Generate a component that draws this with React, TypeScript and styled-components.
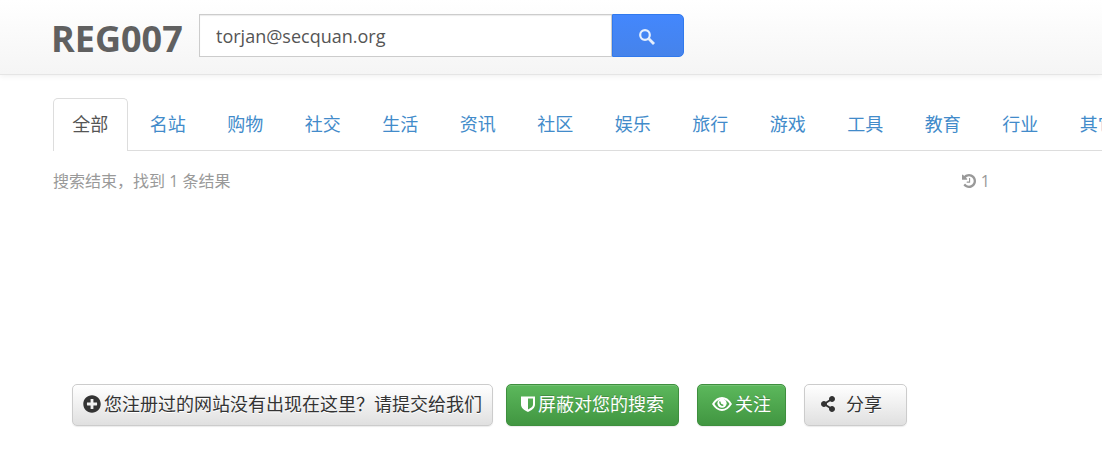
import React from "react";
import styled, { createGlobalStyle, css } from "styled-components";
import { FaPlusCircle, FaShareAlt } from "react-icons/fa";

const GlobalStyle = createGlobalStyle`
  * { box-sizing: border-box; }
  body {
    margin: 0;
    background: #fff;
    color: #333;
    font: 18px/26px "Open Sans", "Noto Sans CJK SC", sans-serif;
    overflow-x: hidden;
  }
`;

const Header = styled.header`
  display: flex;
  align-items: flex-start;
  gap: 18px;
  height: 75px;
  padding: 14px 51px 0;
  background: linear-gradient(#fff, #f5f5f5);
  border-bottom: 1px solid #e5e5e5;
  box-shadow: 0 1px 6px rgba(0, 0, 0, 0.07);
`;

const Logo = styled.a`
  width: 130px;
  color: #606060;
  font-size: 36px;
  font-weight: 700;
  line-height: 50px;
  white-space: nowrap;
  text-decoration: none;
`;

const SearchForm = styled.form`
  display: flex;
  flex: 0 1 485px;
  height: 43px;
`;

const SearchInput = styled.input`
  flex: 1;
  min-width: 0;
  padding: 0 16px;
  border: 1px solid #ccc;
  border-radius: 0;
  background: #fff;
  box-shadow: inset 0 1px 1px rgba(0, 0, 0, 0.08);
  color: #555;
  font: inherit;
  outline: none;
`;

const SearchButton = styled.button`
  display: flex;
  align-items: center;
  justify-content: center;
  width: 72px;
  padding: 2px 2px 0 0;
  border: 1px solid #3079ed;
  border-radius: 0 5px 5px 0;
  background: linear-gradient(#4387fd, #4683ea);
  color: #e6effd;
`;

const TabBar = styled.nav`
  margin: 23px 0 0;
  padding-left: 53px;
  overflow: hidden;
  background: linear-gradient(#ddd, #ddd) 53px 100% / 100% 1px no-repeat;
`;

const TabList = styled.ul`
  display: grid;
  grid-template-columns: repeat(14, 1fr);
  column-gap: 3px;
  width: 1082px;
  margin: 0;
  padding: 0;
  list-style: none;
`;

const Tab = styled.a<{ $active?: boolean }>`
  display: block;
  height: 53px;
  padding-top: 12px;
  border: 1px solid transparent;
  border-bottom: 0;
  border-radius: 5px 5px 0 0;
  color: #428bca;
  text-align: center;
  text-decoration: none;
  ${({ $active }) =>
    $active &&
    css`
      border-color: #ddd;
      background: #fff;
      color: #555;
    `}
`;

const Status = styled.div`
  display: flex;
  justify-content: space-between;
  max-width: 1043px;
  padding: 17px 53px 0;
  color: #999;
  font-size: 16px;
`;

const History = styled.span`
  display: flex;
  align-items: center;
  gap: 5px;
`;

const Results = styled.main`
  min-height: 190px;
`;

const Actions = styled.footer`
  display: flex;
  gap: 18px;
  padding: 0 72px 37px;
`;

const ActionGroup = styled.div`
  display: flex;
  gap: 13px;
`;

const ActionButton = styled.button<{ $green?: boolean; $pad?: number; $gap?: number }>`
  display: flex;
  align-items: center;
  gap: ${({ $gap = 3 }) => $gap}px;
  height: 42px;
  padding: 0 ${({ $pad = 14 }) => $pad}px 2px;
  border: 1px solid ${({ $green }) => ($green ? "#3e8f3e" : "#ccc")};
  border-radius: 5px;
  background: ${({ $green }) =>
    $green ? "linear-gradient(#5cb85c, #419641)" : "linear-gradient(#fff, #e0e0e0)"};
  box-shadow: inset 0 1px 0 rgba(255, 255, 255, 0.15), 0 1px 1px rgba(0, 0, 0, 0.08);
  color: ${({ $green }) => ($green ? "#fff" : "#333")};
  font: inherit;
  text-shadow: ${({ $green }) => ($green ? "0 -1px 0 rgba(0, 0, 0, 0.2)" : "0 1px 0 #fff")};
  white-space: nowrap;

  svg { flex: none; }
`;

const ShareButton = styled(ActionButton)`
  padding-left: 15px;
  padding-right: 24px;
`;

const tabs = ["全部", "名站", "购物", "社交", "生活", "资讯", "社区", "娱乐", "旅行", "游戏", "工具", "教育", "行业", "其它"];

const SearchIcon = () => (
  <svg width="16" height="16" viewBox="0 0 16 16" fill="none" stroke="currentColor" aria-hidden="true">
    <circle cx="6" cy="6" r="4.8" strokeWidth="2.2" />
    <path d="M9.8 9.8 15 15" strokeWidth="2.8" />
  </svg>
);

const HistoryIcon = () => (
  <svg width="14" height="14" viewBox="0 128 1536 1536" fill="currentColor" aria-hidden="true">
    <path d="M1536 896q0 156-61 298t-164 245-245 164-298 61q-172 0-327-72.500t-264-204.500q-7-10-6.500-22.500t8.500-20.500l137-138q10-9 25-9 16 2 23 12 73 95 179 147t225 52q104 0 198.500-40.500t163.500-109.500 109.500-163.500 40.500-198.500-40.500-198.500-109.500-163.500-163.500-109.500-198.500-40.500q-98 0-188 35.500t-160 101.500l137 138q31 30 14 69-17 40-59 40h-448q-26 0-45-19t-19-45v-448q0-42 40-59 39-17 69 14l130 129q107-101 244.500-156.500t284.500-55.500q156 0 298 61t245 164 164 245 61 298zm-640-288v448q0 14-9 23t-23 9h-320q-14 0-23-9t-9-23v-64q0-14 9-23t23-9h224v-352q0-14 9-23t23-9h64q14 0 23 9t9 23z" />
  </svg>
);

const ShieldIcon = () => (
  <svg width="14" height="16" viewBox="0 0 14 16" aria-hidden="true">
    <path fill="currentColor" fillRule="evenodd" d="M0 .5h14v8c0 3.500-3 5.500-7 7.500-4-2-7-4-7-7.500ZM7 2.500v11c3-1.600 5-3 5-5v-6Z" />
  </svg>
);

const EyeIcon = () => (
  <svg width="20" height="16" viewBox="0 0 20 16" fill="none" aria-hidden="true">
    <path stroke="currentColor" strokeWidth="2" d="M1.200 8C3.500 4.300 6.500 2 10 2s6.500 2.300 8.800 6c-2.300 3.700-5.300 6-8.800 6S3.500 11.700 1.200 8Z" />
    <circle cx="10" cy="7.200" r="4.600" fill="currentColor" />
    <path stroke="#4fa84f" strokeWidth="1.500" d="M8 5.500C7.600 7.600 9 9.200 11.300 9.200" />
  </svg>
);

export default function App() {
  return (
    <>
      <GlobalStyle />
      <Header>
        <Logo href="#">REG007</Logo>
        <SearchForm onSubmit={(e) => e.preventDefault()}>
          <SearchInput type="text" aria-label="搜索" defaultValue="torjan@secquan.org" />
          <SearchButton type="submit" aria-label="搜索"><SearchIcon /></SearchButton>
        </SearchForm>
      </Header>
      <TabBar>
        <TabList>
          {tabs.map((name, i) => (
            <li key={name}><Tab href="#" $active={i === 0}>{name}</Tab></li>
          ))}
        </TabList>
      </TabBar>
      <Status>
        <span>搜索结束，找到 1 条结果</span>
        <History><HistoryIcon />1</History>
      </Status>
      <Results />
      <Actions>
        <ActionGroup>
          <ActionButton type="button" $pad={10}><FaPlusCircle size={18} />您注册过的网站没有出现在这里？请提交给我们</ActionButton>
          <ActionButton type="button" $green><ShieldIcon />屏蔽对您的搜索</ActionButton>
        </ActionGroup>
        <ActionButton type="button" $green><EyeIcon />关注</ActionButton>
        <ShareButton type="button" $gap={10}><FaShareAlt size={16} />分享</ShareButton>
      </Actions>
    </>
  );
}
